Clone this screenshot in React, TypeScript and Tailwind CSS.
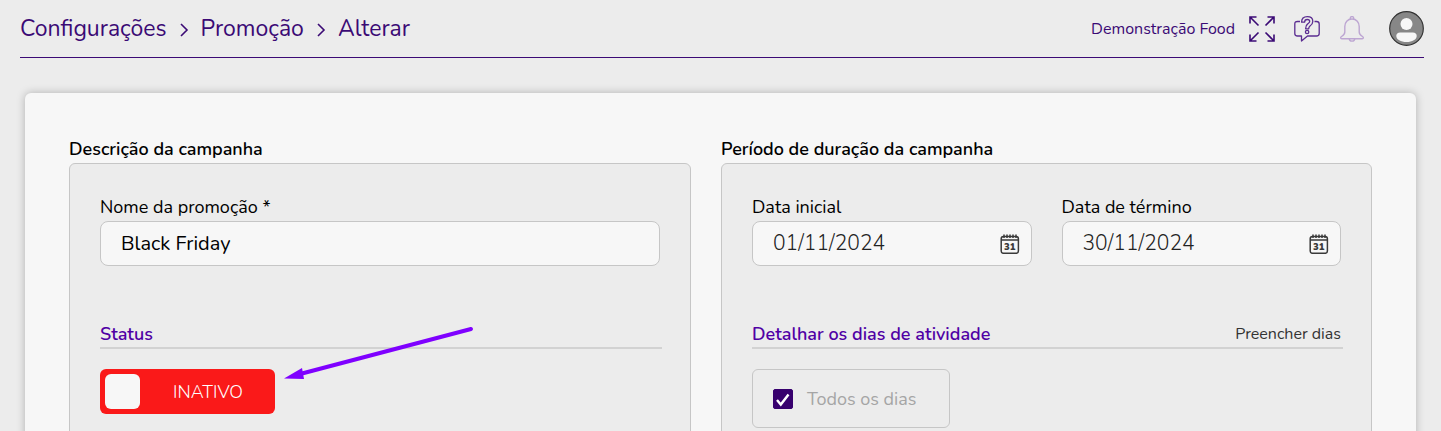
import React, { useState } from 'react';

const ExpandIcon = () => (
    <svg className="h-[26px] w-[26px]" viewBox="0 0 26 26" fill="none" stroke="#3b0a75" strokeWidth="1.6">
        <path d="M1 7.500V1h6.500M1 1l8.500 8.500" />
        <path d="M18.500 1H25v6.500M25 1l-8.500 8.500" />
        <path d="M1 18.500V25h6.500M1 25l8.500-8.500" />
        <path d="M18.500 25H25v-6.500M25 25l-8.500-8.500" />
    </svg>
);

const HelpBubbleIcon = () => (
    <svg className="h-[26px] w-[26px]" viewBox="0 0 26 26" fill="none" stroke="#5b2d91" strokeWidth="1.3" strokeLinejoin="round">
        <path d="M6 5.500H3.500Q.8 5.500 .8 8V17.500Q.8 20 3.500 20H7.500V25L13.500 20H22.500Q25.200 20 25.200 17.500V8Q25.200 5.500 22.500 5.500H20.500" />
        <path d="M7.600 6.200C7.600 2.800 10 .7 13.300.7C16.600.7 18.800 2.700 18.800 5.500C18.800 8 17.400 9 16 10C14.900 10.800 14.700 11.300 14.700 12.800H11.600C11.600 10.200 12.100 9 13.700 7.900C15 7 15.700 6.600 15.700 5.500C15.700 4.300 14.700 3.500 13.300 3.500C11.700 3.500 10.600 4.600 10.600 6.200Z" />
        <circle cx="13.100" cy="16" r="1.700" />
    </svg>
);

const BellIcon = () => (
    <svg className="h-[26px] w-[26px]" viewBox="0 0 26 26" fill="none" stroke="#bda6d2" strokeWidth="1.4" strokeLinejoin="round">
        <path d="M11.300 3.200V2.300a1.700 1.700 0 0 1 3.400 0v.900" />
        <path d="M13 3C8.500 3 5.800 6.300 5.800 10.500V16c0 2.500-1.500 3.400-3.300 4.500-1.400.9-1 2.200.3 2.200h20.400c1.300 0 1.700-1.300.3-2.200-1.800-1.100-3.300-2-3.300-4.500v-5.500C20.200 6.300 17.500 3 13 3z" />
        <path d="M10.300 22.700a2.700 2.400 0 0 0 5.400 0" />
    </svg>
);

const AvatarIcon = () => (
    <svg className="h-[35px] w-[35px]" viewBox="0 0 36 36">
        <circle cx="18" cy="18" r="17.300" fill="#878787" stroke="#333" strokeWidth="1.200" />
        <circle cx="18" cy="13.300" r="6.200" fill="#f7f7f7" />
        <path d="M11.500 22h13c2.600 0 4 1.500 4 3.600 0 3.700-4.700 6.200-10.500 6.200S7.500 29.300 7.500 25.600C7.500 23.500 8.900 22 11.500 22z" fill="#f7f7f7" />
    </svg>
);

const CalendarIcon = () => (
    <svg className="h-5 w-5" viewBox="0 0 20 20" fill="none" stroke="#3a3a3a" strokeWidth="1.500">
        <rect x="1.200" y="2.500" width="17.200" height="16.800" rx="2.300" />
        <path d="M1.200 6H18.400M4 .5v3.500M7 .5v3.500M10 .5v3.500M13 .5v3.500M16 .5v3.500" />
        <text x="9.800" y="16" textAnchor="middle" fontSize="9.500" fontWeight="900" fill="#3a3a3a" stroke="none">31</text>
    </svg>
);

const Chevron = () => (
    <svg className="h-3.5 w-2.5" viewBox="0 0 10 14" fill="none" stroke="#3b0a75" strokeWidth="1.600">
        <path d="M2 1l6 6-6 6" />
    </svg>
);

const PointerArrow = () => (
    <svg className="pointer-events-none absolute left-[184px] top-[-44px] h-[54px] w-[190px]" viewBox="0 0 190 54">
        <path d="M18 48.500L187 4" stroke="#7f00ff" strokeWidth="4" strokeLinecap="round" />
        <path d="M0 53.500L18 43L20 54Z" fill="#7f00ff" />
    </svg>
);

const DateField = ({ id, label, value }: { id: string; label: string; value: string }) => {
    const [date, setDate] = useState(value);

    return (
        <div className="min-w-0 flex-1">
            <label htmlFor={id} className="mb-0.5 block text-lg leading-6 text-black">{label}</label>
            <div className="flex h-[45px] items-center rounded-lg border border-[#c6c6c6] bg-[#f7f7f7] pl-5 pr-[11px]">
                <input
                    id={id}
                    type="text"
                    value={date}
                    onChange={(e) => setDate(e.target.value)}
                    className="min-w-0 flex-1 bg-transparent text-[21px] font-light text-[#222] outline-none"
                />
                <button type="button" aria-label={`Abrir calendário: ${label}`}>
                    <CalendarIcon />
                </button>
            </div>
        </div>
    );
};

const App = () => {
    const [name, setName] = useState('Black Friday');
    const [active, setActive] = useState(false);

    const crumbs = ['Configurações', 'Promoção', 'Alterar'];

    return (
        <div className="h-screen overflow-hidden bg-[#ececec] font-['Nunito','Open_Sans',sans-serif]">
            <header className="ml-5 mr-[17px] flex h-[58px] items-center justify-between border-b border-[#3b0a75]">
                <nav className="flex items-center gap-3 pt-0.5 text-[23px] text-[#3b0a75]">
                    {crumbs.map((crumb, index) => (
                        <React.Fragment key={crumb}>
                            {index > 0 && <Chevron />}
                            <a href="#">{crumb}</a>
                        </React.Fragment>
                    ))}
                </nav>
                <div className="flex items-center">
                    <span className="mr-3.5 text-base text-[#3b0a75]">Demonstração Food</span>
                    <button type="button" aria-label="Tela cheia" className="mr-[19px]"><ExpandIcon /></button>
                    <button type="button" aria-label="Ajuda" className="mr-[19px]"><HelpBubbleIcon /></button>
                    <button type="button" aria-label="Notificações" className="mr-6"><BellIcon /></button>
                    <button type="button" aria-label="Perfil"><AvatarIcon /></button>
                </div>
            </header>

            <main className="mx-[25px] mt-[35px] grid grid-cols-[minmax(0,622fr)_minmax(0,651fr)] gap-x-[30px] rounded-md bg-[#f7f7f7] p-11 shadow-[0_0_8px_rgba(0,0,0,0.25)]">
                <section>
                    <h2 className="mb-0.5 text-lg font-semibold leading-6 text-black">Descrição da campanha</h2>
                    <div className="h-[420px] rounded-md border border-[#c6c6c6] bg-[#ececec] px-[30px] pt-[31px]">
                        <label htmlFor="nome" className="mb-0.5 block text-lg leading-6 text-black">Nome da promoção *</label>
                        <input
                            id="nome"
                            type="text"
                            value={name}
                            onChange={(e) => setName(e.target.value)}
                            className="h-[45px] w-full rounded-lg border border-[#c6c6c6] bg-[#f7f7f7] px-5 text-xl text-black outline-none"
                        />
                        <div className="-mr-0.5 mt-14 border-b-2 border-[#d2d2d2] pb-px">
                            <h3 className="text-lg font-semibold leading-6 text-[#5000a5]">Status</h3>
                        </div>
                        <div className="relative mt-5">
                            <label className={`flex h-[45px] w-[175px] cursor-pointer items-center rounded-md p-[5px] ${active ? 'bg-green-600' : 'bg-[#fa1919]'}`}>
                                <input
                                    type="checkbox"
                                    role="switch"
                                    checked={active}
                                    onChange={(e) => setActive(e.target.checked)}
                                    className="h-[35px] w-[35px] appearance-none rounded-md bg-[#f7f7f7]"
                                />
                                <span className="flex-1 pl-1.5 text-center text-lg font-light text-white">{active ? 'ATIVO' : 'INATIVO'}</span>
                            </label>
                            <PointerArrow />
                        </div>
                    </div>
                </section>

                <section>
                    <h2 className="mb-0.5 text-lg font-semibold leading-6 text-black">Período de duração da campanha</h2>
                    <div className="h-[420px] rounded-md border border-[#c6c6c6] bg-[#ececec] px-[30px] pt-[31px]">
                        <div className="flex gap-[30px]">
                            <DateField id="inicio" label="Data inicial" value="01/11/2024" />
                            <DateField id="termino" label="Data de término" value="30/11/2024" />
                        </div>
                        <div className="-mr-0.5 mt-14 flex justify-between border-b-2 border-[#d2d2d2] pb-px">
                            <h3 className="text-lg font-semibold leading-6 text-[#5000a5]">Detalhar os dias de atividade</h3>
                            <button type="button" className="mr-0.5 text-base leading-6 text-[#333]">Preencher dias</button>
                        </div>
                        <label className="mt-5 flex h-[59px] w-[198px] items-center rounded-md border border-[#c6c6c6] pl-5 text-lg text-[#a5a5a5]">
                            <span className="relative mr-3.5 h-5 w-5">
                                <input type="checkbox" defaultChecked className="peer block h-5 w-5 appearance-none rounded-xs border border-[#37006e] checked:bg-[#37006e]" />
                                <svg className="pointer-events-none absolute inset-0 hidden h-5 w-5 peer-checked:block" viewBox="0 0 20 20" fill="none" stroke="#fff" strokeWidth="2.400">
                                    <path d="M4 11l3.800 4.500L15.500 5.500" />
                                </svg>
                            </span>
                            Todos os dias
                        </label>
                    </div>
                </section>
            </main>
        </div>
    );
};

export default App;
